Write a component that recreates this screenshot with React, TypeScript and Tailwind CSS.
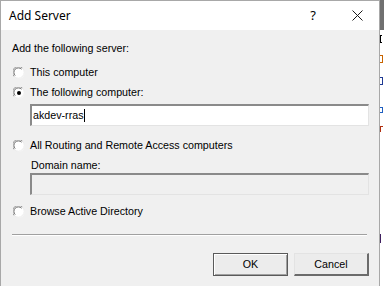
import React from 'react';

const uiFont = { fontFamily: '"Liberation Sans", Arial, sans-serif' };

function Radio({ checked }: { checked?: boolean }) {
  return (
    <svg width="12" height="12" viewBox="0 0 12 12" className="shrink-0">
      <circle cx="6" cy="6" r="5.5" fill="#ffffff" />
      <path d="M1.2 9.5 A5.3 5.3 0 0 1 9.5 1.2" fill="none" stroke="#9a9a9a" strokeWidth="1" />
      <path d="M2.2 8.6 A4.2 4.2 0 0 1 8.6 2.2" fill="none" stroke="#6b6b6b" strokeWidth="1" />
      <path d="M9.5 1.2 A5.3 5.3 0 0 1 1.2 9.5" fill="none" stroke="#ececec" strokeWidth="1" />
      {checked && <circle cx="6" cy="6" r="2" fill="#000000" />}
    </svg>
  );
}

function RadioRow({ label, checked }: { label: string; checked?: boolean }) {
  return (
    <div className="flex items-center h-[13px] ml-[1px] gap-[5px]">
      <Radio checked={checked} />
      <span className="text-[10.7px] leading-[13px] text-black whitespace-nowrap">{label}</span>
    </div>
  );
}

function TextBox({ value, disabled }: { value?: string; disabled?: boolean }) {
  return (
    <div
      className={`ml-[18px] h-[22px] border-t-2 border-l-2 border-b border-r border-t-[#8a8a8a] border-l-[#8a8a8a] border-b-[#e3e3e3] border-r-[#e3e3e3] flex items-center px-[1px] ${
        disabled ? 'bg-[#f0f0f0]' : 'bg-white'
      }`}
    >
      {value && (
        <span className="text-[10.7px] leading-[13px] text-black flex items-center">
          {value}
          <span className="inline-block w-[1px] h-[13px] bg-black ml-[1px]" />
        </span>
      )}
    </div>
  );
}

function Button({ label, isDefault }: { label: string; isDefault?: boolean }) {
  return (
    <button
      className={`w-[75px] h-[23px] bg-[#ececec] text-[10.7px] leading-[13px] text-black flex items-center justify-center ${
        isDefault
          ? 'border border-[#5a5a5a] shadow-[inset_1px_1px_0_#ffffff,inset_-1px_-1px_0_#a0a0a0]'
          : 'border-t border-l border-b-2 border-r-2 border-t-[#e3e3e3] border-l-[#e3e3e3] border-b-[#6b6b6b] border-r-[#6b6b6b]'
      }`}
      style={uiFont}
    >
      {label}
    </button>
  );
}

export default function App() {
  return (
    <div className="flex w-[384px] h-[286px] overflow-hidden bg-white" style={uiFont}>
      <div className="w-[380px] h-full flex flex-col border-l border-r border-t border-[#a8a8a8] shrink-0">
        <div className="h-[29px] bg-white flex items-center">
          <span
            className="ml-[8px] text-[12px] text-black"
            style={{ fontFamily: '"Noto Sans", "Open Sans", sans-serif' }}
          >
            Add Server
          </span>
          <span
            className="ml-auto mr-[36px] text-[13px] text-black"
            style={{ fontFamily: '"Noto Sans", "Open Sans", sans-serif' }}
          >
            ?
          </span>
          <svg width="11" height="11" viewBox="0 0 11 11" className="mr-[16px]">
            <path d="M0.5 0.5 L10.5 10.5 M10.5 0.5 L0.5 10.5" stroke="#1a1a1a" strokeWidth="1" />
          </svg>
        </div>
        <div className="flex-1 bg-[#f0f0f0] pl-[11px] pr-[10px] flex flex-col">
          <div className="mt-[12px] text-[10.7px] leading-[13px] text-black">Add the following server:</div>
          <div className="mt-[11px]">
            <RadioRow label="This computer" />
          </div>
          <div className="mt-[7px]">
            <RadioRow label="The following computer:" checked />
          </div>
          <div className="mt-[5px]">
            <TextBox value="akdev-rras" />
          </div>
          <div className="mt-[13px]">
            <RadioRow label="All Routing and Remote Access computers" />
          </div>
          <div className="mt-[7px] ml-[19px] text-[10.7px] leading-[13px] text-black">Domain name:</div>
          <div className="mt-[1px]">
            <TextBox disabled />
          </div>
          <div className="mt-[10px]">
            <RadioRow label="Browse Active Directory" />
          </div>
          <div className="mt-[16px] mr-[2px] h-[2px] border-t border-[#a0a0a0] border-b border-b-white" />
          <div className="mt-[17px] flex justify-end gap-[6px]">
            <Button label="OK" isDefault />
            <Button label="Cancel" />
          </div>
        </div>
      </div>
      {/* sliver of the window behind the dialog */}
      <div className="w-[4px] h-full flex flex-col overflow-hidden">
        <div className="h-[30px] bg-[#707070] shrink-0" />
        <div className="mt-[5px] w-[2px] h-[8px] border-l border-t border-b border-black" />
        <div className="mt-[12px] w-[3px] h-[8px] border border-l-0 border-[#c86400]" />
        <div className="mt-[14px] w-[3px] h-[8px] border border-l-0 border-[#1f3a93]" />
        <div className="mt-[22px] w-[3px] h-[6px] border border-l-0 border-[#1f5fc0]" />
        <div className="mt-[13px] w-[3px] h-[6px] border-t border-l border-[#b03010]" />
        <div className="mt-[102px] w-[2px] h-[9px] border-l border-[#402060]" />
      </div>
    </div>
  );
}
